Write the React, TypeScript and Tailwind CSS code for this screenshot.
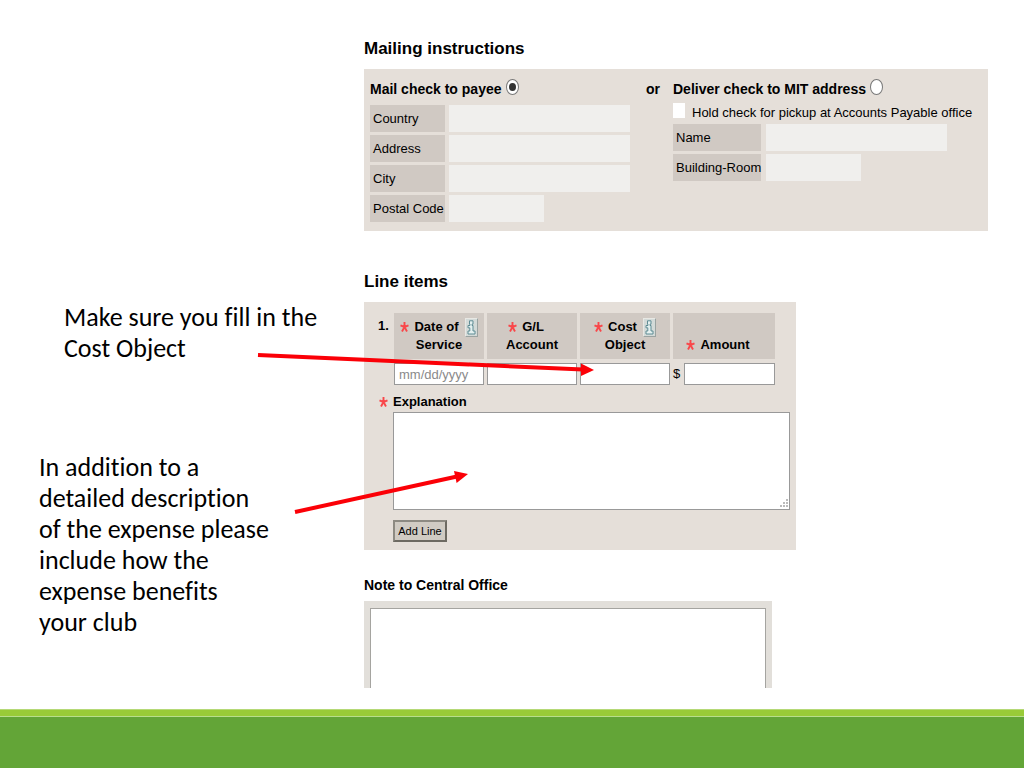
import React from 'react';

function Required() {
  return (
    <svg className="inline-block w-[9px] h-3 mr-[5px] shrink-0" viewBox="0 0 9 12" aria-label="required">
      <path
        d="M4.5 6V1M4.5 6L0.5 4.4M4.5 6L8.5 4.4M4.5 6L2 10.5M4.5 6L7 10.5"
        stroke="#f9474a"
        strokeWidth="1.9"
        fill="none"
      />
    </svg>
  );
}

function InfoButton({ label }: { label: string }) {
  return (
    <button
      type="button"
      aria-label={label}
      className="w-[13px] h-[19px] ml-[6px] bg-[#d3dad8] border border-[#e8e8e4] border-r-[#9aa3a1] border-b-[#9aa3a1]"
    >
      <svg className="block w-full h-full" viewBox="0 0 11 17">
        <path
          d="M3.500 1.800h3.500v3.400h-1v1.300h1v5.500h2v3H2v-3h1.800V8.800H2V6.500h2V5.200h-.5z"
          fill="#e4f0ef"
          stroke="#5f8c94"
          strokeWidth="1"
        />
      </svg>
    </button>
  );
}

function AddressField({ id, label, short = false }: { id: string, label: string, short?: boolean }) {
  return (
    <>
      <label htmlFor={id} className="h-[27px] pl-[3px] leading-7 bg-[#d0c9c3] whitespace-nowrap">{label}</label>
      <input
        id={id}
        type="text"
        className={short ? 'w-[95px] h-[27px] px-1 bg-[#f0efed]' : 'w-[181px] h-[27px] px-1 bg-[#f0efed]'}
      />
    </>
  );
}

function DeliveryRadio({ id, defaultChecked = false }: { id: string, defaultChecked?: boolean }) {
  return (
    <input
      id={id}
      type="radio"
      name="delivery"
      defaultChecked={defaultChecked}
      className="appearance-none flex items-center justify-center w-[13px] h-4 ml-1 mb-1 bg-white border border-[#777] rounded-[50%] checked:before:content-[''] checked:before:w-[7px] checked:before:h-2 checked:before:rounded-[50%] checked:before:bg-[#333]"
    />
  );
}

function MailingInstructions() {
  return (
    <section>
      <h2 className="text-[17px] leading-6 font-bold">Mailing instructions</h2>
      <div className="flex mt-2 w-[624px] min-h-[162px] px-[6px] pt-2 pb-2 bg-[#e5dfd9]">
        <div>
          <div className="flex items-center h-6 text-[14px] font-bold">
            <label htmlFor="to-payee">Mail check to payee</label>
            <DeliveryRadio id="to-payee" defaultChecked />
          </div>
          <div className="grid grid-cols-[75px_auto] gap-x-1 gap-y-[3px] mt-1">
            <AddressField id="country" label="Country" />
            <AddressField id="address" label="Address" />
            <AddressField id="city" label="City" />
            <AddressField id="postal" label="Postal Code" short />
          </div>
        </div>
        <div className="ml-4 mr-[13px] h-6 leading-6 text-[14px] font-bold">or</div>
        <div>
          <div className="flex items-center h-6 text-[14px] font-bold">
            <label htmlFor="to-mit">Deliver check to MIT address</label>
            <DeliveryRadio id="to-mit" />
          </div>
          <div className="flex items-center h-[23px]">
            <input id="hold" type="checkbox" className="appearance-none w-3 h-[15px] mb-1 mr-[7px] bg-white checked:bg-[#333]" />
            <label htmlFor="hold" className="whitespace-nowrap">Hold check for pickup at Accounts Payable office</label>
          </div>
          <div className="grid grid-cols-[88px_auto] gap-x-[5px] gap-y-[3px]">
            <AddressField id="name" label="Name" />
            <AddressField id="room" label="Building-Room" short />
          </div>
        </div>
      </div>
    </section>
  );
}

const cellInput = 'block w-full h-[22px] px-1 bg-white border border-[#999] placeholder:text-[#8a8a8a]';

function LineItems() {
  return (
    <section className="mt-[39px]">
      <h2 className="text-[17px] leading-6 font-bold">Line items</h2>
      <div className="mt-2 w-[432px] pl-2 pr-[6px] pt-[7px] pb-2 bg-[#e5dfd9]">
        <table className="border-separate border-spacing-x-[3px] border-spacing-y-1 leading-[18px]">
          <thead>
            <tr className="h-[46px]">
              <td className="w-4 p-0 pt-1 pl-[3px] align-top font-bold">1.</td>
              <th className="w-[90px] p-0 pb-[5px] align-bottom bg-[#d0c9c3]">
                <div className="flex items-center justify-center h-[18px]"><Required />Date of<InfoButton label="About date of service" /></div>
                Service
              </th>
              <th className="w-[90px] p-0 pb-[5px] align-bottom bg-[#d0c9c3]">
                <div className="flex items-center justify-center h-[18px] mr-3"><Required />G/L</div>
                Account
              </th>
              <th className="w-[90px] p-0 pb-[5px] align-bottom bg-[#d0c9c3]">
                <div className="flex items-center justify-center h-[18px]"><Required />Cost<InfoButton label="About cost object" /></div>
                Object
              </th>
              <th className="w-[102px] p-0 pb-[5px] align-bottom bg-[#d0c9c3]">
                <div className="flex items-center justify-center h-[18px] mr-3"><Required />Amount</div>
              </th>
            </tr>
          </thead>
          <tbody>
            <tr>
              <td className="p-0" />
              <td className="p-0"><input type="text" aria-label="Date of Service" placeholder="mm/dd/yyyy" className={cellInput} /></td>
              <td className="p-0"><input type="text" aria-label="G/L Account" className={cellInput} /></td>
              <td className="p-0"><input type="text" aria-label="Cost Object" className={cellInput} /></td>
              <td className="p-0">
                <div className="flex items-center">
                  <span className="w-[11px] shrink-0">$</span>
                  <input type="text" aria-label="Amount" className={cellInput} />
                </div>
              </td>
            </tr>
          </tbody>
        </table>
        <label htmlFor="explanation" className="flex items-center h-5 mt-[3px] ml-[7px] font-bold"><Required />Explanation</label>
        <div className="relative ml-[21px]">
          <textarea id="explanation" className="block w-full h-[98px] p-1 bg-white border border-[#999] resize-none" />
          <svg className="absolute right-[2px] bottom-[2px] w-2 h-[9px]" viewBox="0 0 8 9">
            <path
              d="M6 0h2v2H6zM3 3h2v2H3zM6 3h2v2H6zM0 6h2v2H0zM3 6h2v2H3zM6 6h2v2H6z"
              fill="#bbb"
            />
          </svg>
        </div>
        <button
          type="button"
          className="block mt-[10px] ml-[21px] h-[22px] w-[54px] text-[11px] leading-[18px] whitespace-nowrap bg-[#d0cbc3] border-2 border-[#8d8a82] border-r-[#6d6a62] border-b-[#6d6a62]"
        >
          Add Line
        </button>
      </div>
    </section>
  );
}

function CentralOfficeNote() {
  return (
    <section className="mt-[23px]">
      <label htmlFor="note" className="block text-[14px] leading-6 font-bold">Note to Central Office</label>
      <div className="mt-1 w-[408px] px-[6px] pt-[7px] bg-[#e2dfda]">
        <textarea id="note" className="block w-full h-20 p-1 bg-white border border-b-0 border-[#a5a4a0] resize-none" />
      </div>
    </section>
  );
}

function Arrows() {
  return (
    <svg className="absolute left-0 top-0 w-[640px] h-[560px] pointer-events-none" viewBox="0 0 640 560">
      <g stroke="#fb0007" fill="#fb0007">
        <path d="M258 355L583 369.5" strokeWidth="4" />
        <path d="M594 370L581 376V363.500z" stroke="none" />
        <path d="M295 512L457 476.500" strokeWidth="4" />
        <path d="M468 474L456.600 483L454 471z" stroke="none" />
      </g>
    </svg>
  );
}

export default function App() {
  return (
    <div className="flex flex-col min-h-screen bg-white text-black">
      <main className="relative flex flex-1 pt-[37px]">
        <aside className="w-[364px] shrink-0 pt-[265px] pl-[39px] text-[26px] leading-[31px] [font-variant-ligatures:none] font-[Carlito,Lato,sans-serif]">
          <p className="pl-[25px]">Make sure you fill in the<br />Cost Object</p>
          <p className="mt-[88px]">
            In addition to a<br />detailed description<br />of the expense please<br />include how the<br />expense benefits<br />your club
          </p>
        </aside>
        <form className="font-['Liberation_Sans',Arial,sans-serif] text-[13px]">
          <MailingInstructions />
          <LineItems />
          <CentralOfficeNote />
        </form>
        <Arrows />
      </main>
      <footer>
        <div className="h-[7px] bg-[#99cb38] border-t border-[#b5d977]" />
        <div className="h-[52px] bg-[#63a537] border-t border-[#b9de8c]" />
      </footer>
    </div>
  );
}
